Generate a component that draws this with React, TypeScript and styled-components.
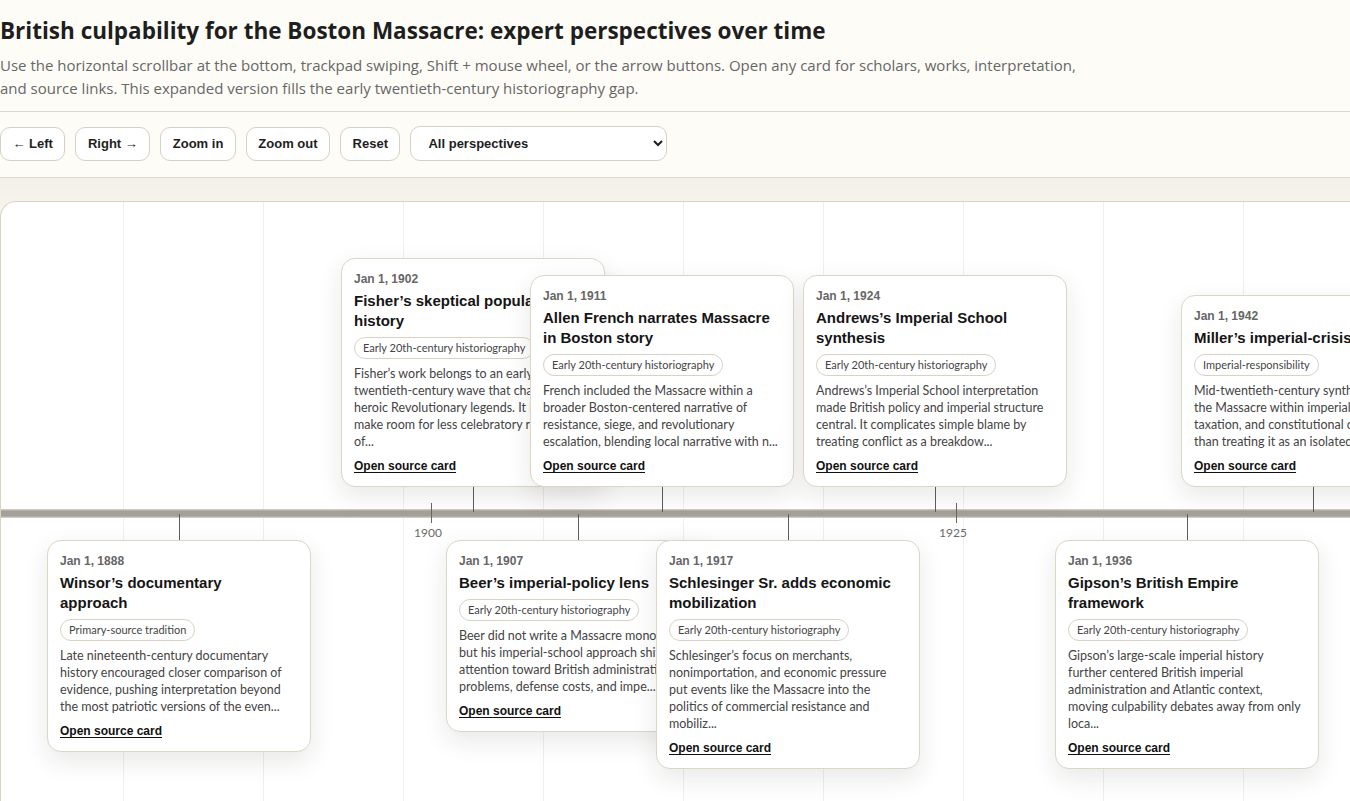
import React from "react";
import styled, { createGlobalStyle } from "styled-components";

const GlobalStyle = createGlobalStyle`
  html, body {
    margin: 0;
    padding: 0;
  }
  body {
    background: #fdfcf7;
    color: #1e1e1e;
    overflow-x: hidden;
    font-family: Lato, "Liberation Sans", sans-serif;
  }
`;

const Header = styled.header`
  padding: 17px 0 11px;
  border-bottom: 1px solid #dcd8ce;
`;

const Title = styled.h1`
  margin: 0;
  font-family: "Open Sans", Lato, sans-serif;
  font-size: 22.5px;
  line-height: 28px;
  font-weight: 700;
  color: #1e1e1e;
`;

const Subtitle = styled.p`
  margin: 9px 0 0;
  font-family: "Open Sans", Lato, sans-serif;
  font-size: 15px;
  line-height: 23px;
  color: #676767;
`;

const Toolbar = styled.div`
  display: flex;
  align-items: center;
  gap: 10px;
  padding: 14px 0 16px;
  border-bottom: 1px solid #dcd8ce;
`;

const Button = styled.button`
  height: 34px;
  padding: 0 11.5px;
  border: 1px solid #d6d1c5;
  border-radius: 10px;
  background: #fff;
  color: #1e1e1e;
  font-family: "Liberation Sans", Arial, sans-serif;
  font-size: 13px;
  font-weight: 700;
  cursor: pointer;
`;

const Select = styled.select`
  width: 257px;
  height: 35px;
  padding: 0 8px 0 13px;
  border: 1px solid #d6d1c5;
  border-radius: 10px;
  background: #fff;
  color: #1e1e1e;
  font-family: "Liberation Sans", Arial, sans-serif;
  font-size: 13px;
  font-weight: 700;
`;

const Stage = styled.section`
  padding-top: 23px;
  background: linear-gradient(#f3f0e9, #f7f5ef 40px);
`;

const Panel = styled.div`
  background: #fff;
  border: 1px solid #d9d3c4;
  border-right: none;
  border-bottom: none;
  border-top-left-radius: 16px;
  overflow: hidden;
`;

const Canvas = styled.div`
  position: relative;
  height: 620px;
  background-image: linear-gradient(to right, #efefef 1px, transparent 1px);
  background-size: 140px 100%;
  background-position: 122px 0;
`;

const Axis = styled.div`
  position: absolute;
  left: 0;
  right: 0;
  top: 307px;
  height: 9px;
  background: linear-gradient(#dedad4, #a6a09a 22%, #a6a09a 78%, #dedad4);
`;

const YearTick = styled.span<{ $x: number }>`
  position: absolute;
  left: ${(p) => p.$x}px;
  top: 301px;
  width: 1px;
  height: 20px;
  background: #666;
`;

const YearLabel = styled.span<{ $x: number }>`
  position: absolute;
  left: ${(p) => p.$x - 23}px;
  top: 324px;
  width: 40px;
  text-align: center;
  font-size: 12px;
  line-height: 14px;
  color: #6a6a6a;
`;

const Connector = styled.span<{ $x: number; $side: Side }>`
  position: absolute;
  left: ${(p) => p.$x}px;
  top: ${(p) => (p.$side === "above" ? 285 : 312)}px;
  width: 1px;
  height: ${(p) => (p.$side === "above" ? 25 : 26)}px;
  background: #5e5e5e;
`;

const Card = styled.article<{ $x: number; $side: Side }>`
  position: absolute;
  left: ${(p) => p.$x - 132}px;
  top: ${(p) => (p.$side === "above" ? 285 : 338)}px;
  transform: ${(p) => (p.$side === "above" ? "translateY(-100%)" : "none")};
  box-sizing: border-box;
  width: 264px;
  padding: 12px;
  overflow: hidden;
  background: #fff;
  border: 1px solid #dcd6c8;
  border-radius: 14px;
  box-shadow: 0 9px 26px rgba(40, 32, 20, 0.1);
`;

const DateText = styled.div`
  font-family: "Liberation Sans", Arial, sans-serif;
  font-size: 12px;
  line-height: 16px;
  font-weight: 700;
  color: #666;
`;

const CardTitle = styled.h3`
  margin: 4px 0 0;
  font-family: "Liberation Sans", Arial, sans-serif;
  font-size: 15px;
  line-height: 20px;
  font-weight: 700;
  color: #151515;
`;

const Line = styled.span`
  display: block;
  white-space: nowrap;
`;

const Tag = styled.div`
  width: fit-content;
  box-sizing: border-box;
  height: 22px;
  margin-top: 6px;
  padding: 0 8px;
  border: 1px solid #d8d2c4;
  border-radius: 999px;
  font-size: 11px;
  line-height: 20px;
  color: #454545;
`;

const Body = styled.p`
  margin: 6px 0 0;
  font-size: 12.5px;
  line-height: 17px;
  color: #444;
`;

const SourceLink = styled.a`
  display: block;
  margin-top: 8px;
  font-family: "Liberation Sans", Arial, sans-serif;
  font-size: 12px;
  line-height: 16px;
  font-weight: 700;
  color: #111;
  text-decoration: underline;
  text-underline-offset: 2px;
  cursor: pointer;
`;

type Side = "above" | "below";

type Perspective = {
  year: number;
  side: Side;
  title: string[];
  tag: string;
  body: string[];
};

const EARLY = "Early 20th-century historiography";

const items: Perspective[] = [
  {
    year: 1888,
    side: "below",
    title: ["Winsor’s documentary", "approach"],
    tag: "Primary-source tradition",
    body: [
      "Late nineteenth-century documentary",
      "history encouraged closer comparison of",
      "evidence, pushing interpretation beyond",
      "the most patriotic versions of the even...",
    ],
  },
  {
    year: 1902,
    side: "above",
    title: ["Fisher’s skeptical popular", "history"],
    tag: EARLY,
    body: [
      "Fisher’s work belongs to an early",
      "twentieth-century wave that challenged",
      "heroic Revolutionary legends. It helped",
      "make room for less celebratory readings",
      "of...",
    ],
  },
  {
    year: 1907,
    side: "below",
    title: ["Beer’s imperial-policy lens"],
    tag: EARLY,
    body: [
      "Beer did not write a Massacre monograph,",
      "but his imperial-school approach shifted",
      "attention toward British administrative",
      "problems, defense costs, and impe...",
    ],
  },
  {
    year: 1911,
    side: "above",
    title: ["Allen French narrates Massacre", "in Boston story"],
    tag: EARLY,
    body: [
      "French included the Massacre within a",
      "broader Boston-centered narrative of",
      "resistance, siege, and revolutionary",
      "escalation, blending local narrative with n...",
    ],
  },
  {
    year: 1917,
    side: "below",
    title: ["Schlesinger Sr. adds economic", "mobilization"],
    tag: EARLY,
    body: [
      "Schlesinger’s focus on merchants,",
      "nonimportation, and economic pressure",
      "put events like the Massacre into the",
      "politics of commercial resistance and",
      "mobiliz...",
    ],
  },
  {
    year: 1924,
    side: "above",
    title: ["Andrews’s Imperial School", "synthesis"],
    tag: EARLY,
    body: [
      "Andrews’s Imperial School interpretation",
      "made British policy and imperial structure",
      "central. It complicates simple blame by",
      "treating conflict as a breakdow...",
    ],
  },
  {
    year: 1936,
    side: "below",
    title: ["Gipson’s British Empire", "framework"],
    tag: EARLY,
    body: [
      "Gipson’s large-scale imperial history",
      "further centered British imperial",
      "administration and Atlantic context,",
      "moving culpability debates away from only",
      "loca...",
    ],
  },
  {
    year: 1942,
    side: "above",
    title: ["Miller’s imperial-crisis view"],
    tag: "Imperial-responsibility",
    body: [
      "Mid-twentieth-century synthesis placed",
      "the Massacre within imperial reform,",
      "taxation, and constitutional conflict rather",
      "than treating it as an isolated...",
    ],
  },
];

// 21px per year, 1900 sits at x=430 inside the canvas
const xFor = (year: number) => 430 + (year - 1900) * 21;

const App = () => {
  return (
    <>
      <GlobalStyle />
      <Header>
        <Title>British culpability for the Boston Massacre: expert perspectives over time</Title>
        <Subtitle>
          Use the horizontal scrollbar at the bottom, trackpad swiping, Shift + mouse wheel, or the arrow buttons. Open any card for scholars, works, interpretation,
          <br />
          and source links. This expanded version fills the early twentieth-century historiography gap.
        </Subtitle>
      </Header>
      <Toolbar>
        <Button>← Left</Button>
        <Button>Right →</Button>
        <Button>Zoom in</Button>
        <Button>Zoom out</Button>
        <Button>Reset</Button>
        <Select defaultValue="all">
          <option value="all">All perspectives</option>
          <option value="primary">Primary-source tradition</option>
          <option value="early">Early 20th-century historiography</option>
          <option value="imperial">Imperial-responsibility</option>
        </Select>
      </Toolbar>
      <Stage>
        <Panel>
          <Canvas>
            <Axis />
            {[1900, 1925].map((y) => (
              <React.Fragment key={y}>
                <YearTick $x={xFor(y)} />
                <YearLabel $x={xFor(y)}>{y}</YearLabel>
              </React.Fragment>
            ))}
            {items.map((it) => (
              <Connector key={"c" + it.year} $x={xFor(it.year)} $side={it.side} />
            ))}
            {items.map((it) => (
              <Card key={it.year} $x={xFor(it.year)} $side={it.side}>
                <DateText>Jan 1, {it.year}</DateText>
                <CardTitle>
                  {it.title.map((t) => (
                    <Line key={t}>{t}</Line>
                  ))}
                </CardTitle>
                <Tag>{it.tag}</Tag>
                <Body>
                  {it.body.map((b) => (
                    <Line key={b}>{b}</Line>
                  ))}
                </Body>
                <SourceLink>Open source card</SourceLink>
              </Card>
            ))}
          </Canvas>
        </Panel>
      </Stage>
    </>
  );
};

export default App;
